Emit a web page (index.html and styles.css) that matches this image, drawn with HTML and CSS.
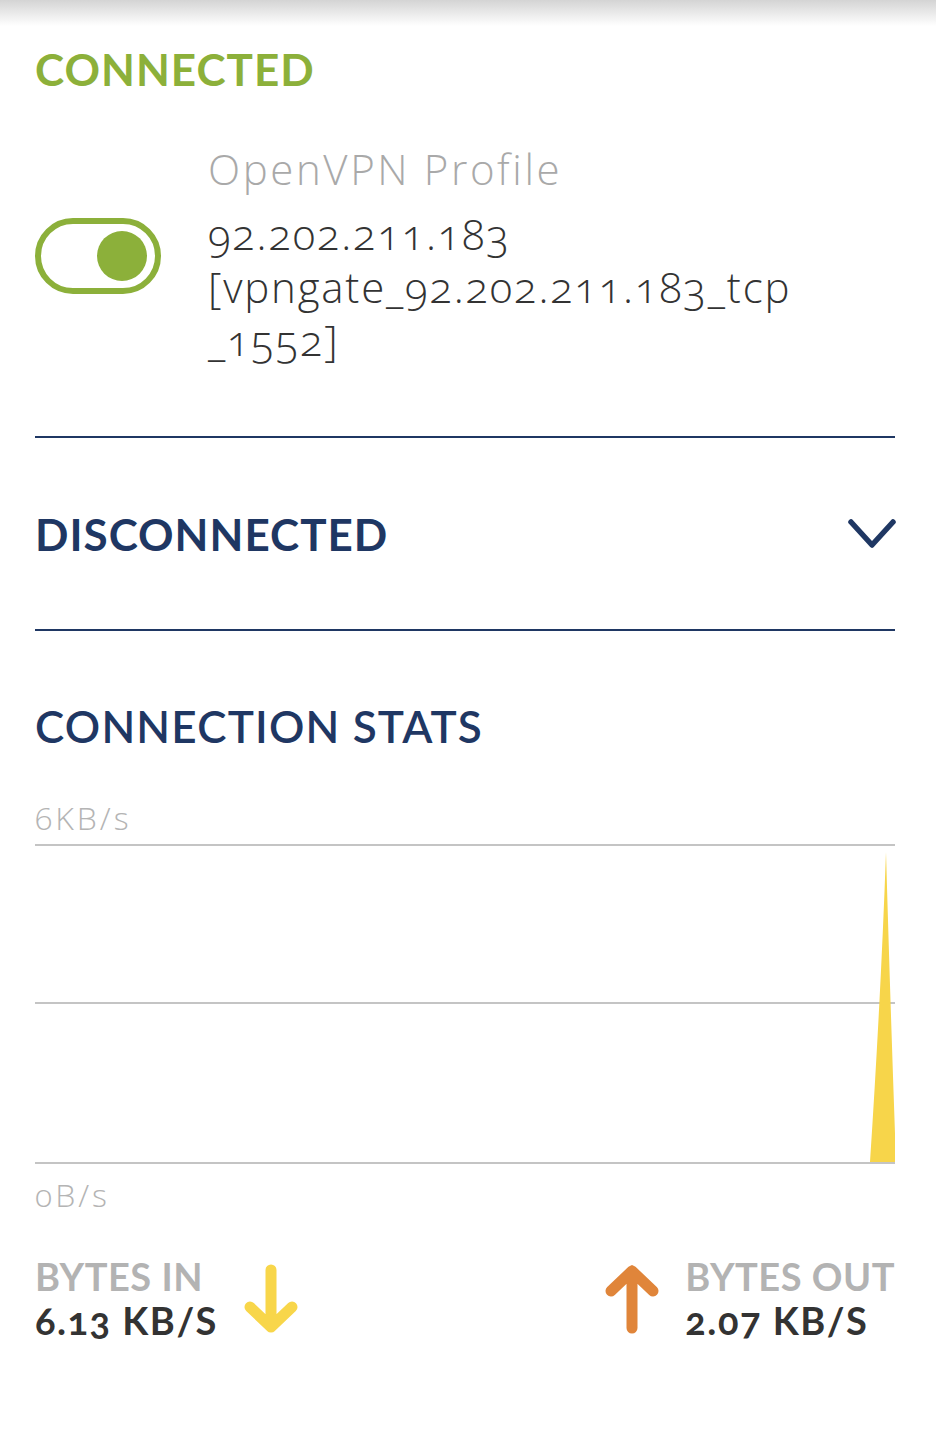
FILE: index.html
```html
<!DOCTYPE html>
<html lang="en">
<head>
    <meta charset="UTF-8">
    <meta name="viewport" content="width=device-width, initial-scale=1.0">
    <title>OpenVPN - Status</title>
    <link rel="stylesheet" href="styles.css">
</head>
<body>

    <div class="top-shade"></div>

    <main class="screen">
        <h2 class="status-title">CONNECTED</h2>

        <div class="profile">
            <div class="toggle">
                <span class="knob"></span>
            </div>
            <div class="profile-info">
                <div class="profile-name">OpenVPN Profile</div>
                <div class="profile-server">92.202.211.183<br>[vpngate_92.202.211.183_tcp<br>_1552]</div>
            </div>
        </div>

        <div class="accordion">
            <span class="accordion-title">DISCONNECTED</span>
            <svg class="chevron" width="50" height="32" viewBox="0 0 50 32">
                <path d="M4 4 L25 27 L46 4" fill="none" stroke="#1f3763" stroke-width="5.5" stroke-linecap="round" stroke-linejoin="round"/>
            </svg>
        </div>

        <section class="stats">
            <h3 class="stats-title">CONNECTION STATS</h3>

            <div class="axis-label">6KB/s</div>
            <!-- graph: 3 grid lines + traffic spike -->
            <svg class="chart" width="860" height="321" viewBox="0 0 860 321">
                <line x1="0" y1="1" x2="860" y2="1" stroke="#c4c4c4" stroke-width="2"/>
                <line x1="0" y1="159" x2="860" y2="159" stroke="#c4c4c4" stroke-width="2"/>
                <line x1="0" y1="319" x2="860" y2="319" stroke="#c4c4c4" stroke-width="2"/>
                <path d="M835 318 Q846 150 851 8 Q855 150 861 318 Z" fill="#f7d54a"/>
            </svg>
            <div class="axis-label">0B/s</div>

            <div class="bytes">
                <div class="bytes-item">
                    <div class="bytes-text">
                        <div class="bytes-label">BYTES IN</div>
                        <div class="bytes-value">6.13 KB/S</div>
                    </div>
                    <svg class="arrow" width="56" height="70" viewBox="0 0 56 70">
                        <path d="M28 6 V63 M7 43 L28 63 L49 43" fill="none" stroke="#f8d64a" stroke-width="11" stroke-linecap="round" stroke-linejoin="round"/>
                    </svg>
                </div>
                <div class="bytes-item">
                    <svg class="arrow" width="56" height="70" viewBox="0 0 56 70">
                        <path d="M28 64 V7 M7 27 L28 7 L49 27" fill="none" stroke="#e0853a" stroke-width="11" stroke-linecap="round" stroke-linejoin="round"/>
                    </svg>
                    <div class="bytes-text">
                        <div class="bytes-label">BYTES OUT</div>
                        <div class="bytes-value">2.07 KB/S</div>
                    </div>
                </div>
            </div>
        </section>
    </main>

</body>
</html>
```

FILE: styles.css
```css
body {
    margin: 0;
    background: #fff;
    font-family: Lato, "Open Sans", sans-serif;
    font-variant-numeric: oldstyle-nums;
}
.top-shade {
    height: 26px;
    background: linear-gradient(#d4d4d4, #fff);
}
.screen {
    padding: 0 41px 0 35px;
}
.status-title {
    margin: 21px 0 0;
    font-size: 44px;
    line-height: 44px;
    font-weight: 700;
    letter-spacing: 1px;
    color: #8cb03a;
}
.profile {
    display: flex;
    align-items: center;
    gap: 47px;
    margin-top: 54px;
}
.toggle {
    width: 100px;
    height: 64px;
    padding: 0 8px 0 6px;
    border: 6px solid #8cb03a;
    border-radius: 40px;
    display: flex;
    align-items: center;
    justify-content: flex-end;
    flex-shrink: 0;
}
.knob {
    width: 50px;
    height: 50px;
    border-radius: 50%;
    background: #8cb03a;
}
.profile-info {
    font-family: "Open Sans", Lato, sans-serif;
    font-weight: 300;
    font-size: 42px;
}
.profile-name {
    line-height: 48px;
    letter-spacing: 2.6px;
    color: #a9a9a9;
    margin-bottom: 14px;
}
.profile-server {
    line-height: 53px;
    letter-spacing: 1.8px;
    color: #333;
}
.accordion {
    display: flex;
    align-items: center;
    justify-content: space-between;
    height: 191px;
    margin-top: 70px;
    border-top: 2px solid #1f3763;
    border-bottom: 2px solid #1f3763;
}
.accordion-title {
    font-size: 44px;
    line-height: 1;
    font-weight: 700;
    letter-spacing: 1px;
    color: #1f3763;
}
.chevron {
    margin-right: -2px;
}
.stats-title {
    margin: 74px 0 0;
    font-size: 44px;
    line-height: 42px;
    font-weight: 600;
    letter-spacing: 1.2px;
    color: #1f3763;
}
.axis-label {
    font-family: "Open Sans", Lato, sans-serif;
    font-size: 32px;
    line-height: 28px;
    font-weight: 300;
    letter-spacing: 3px;
    color: #b4b4b4;
    margin-top: 57px;
}
.chart {
    display: block;
    margin-top: 12px;
}
.chart + .axis-label {
    margin-top: 16px;
}
.bytes {
    display: flex;
    justify-content: space-between;
    align-items: center;
    margin-top: 46px;
}
.bytes-item {
    display: flex;
    align-items: center;
    gap: 25px;
}
.bytes-label {
    font-size: 38px;
    line-height: 42px;
    font-weight: 700;
    letter-spacing: 0.5px;
    color: #b3b3b3;
}
.bytes-value {
    font-size: 38px;
    line-height: 46px;
    font-weight: 700;
    letter-spacing: 1.5px;
    color: #333;
}
```
